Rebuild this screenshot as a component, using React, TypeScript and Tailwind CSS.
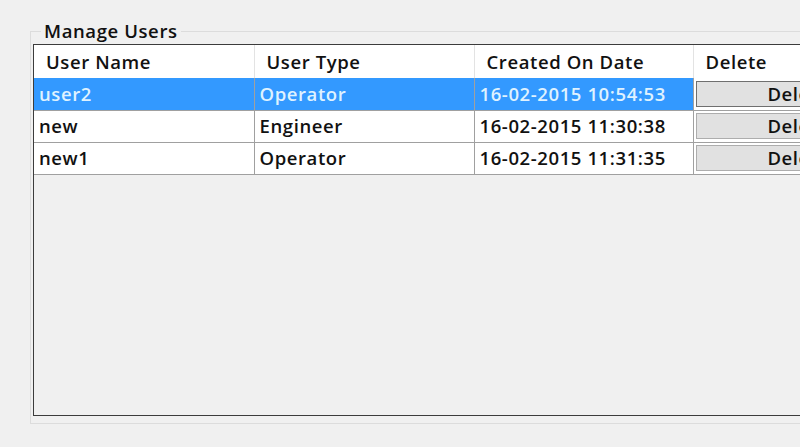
import React from 'react';

interface UserRow {
  name: string;
  type: string;
  created: string;
}

const users: UserRow[] = [
  { name: 'user2', type: 'Operator', created: '16-02-2015 10:54:53' },
  { name: 'new', type: 'Engineer', created: '16-02-2015 11:30:38' },
  { name: 'new1', type: 'Operator', created: '16-02-2015 11:31:35' },
];

const selectedIndex = 0;

const App: React.FC = () => {
  return (
    <div className="w-[800px] h-[447px] overflow-hidden bg-[#f0f0f0] pt-[19px] pl-[30px] font-['Open_Sans',sans-serif] text-[18.5px] font-semibold tracking-[0.6px] text-[#111]">
      <fieldset className="w-[820px] h-[405px] border border-[#dcdcdc] pl-[2px] pt-0">
        <legend className="ml-[8px] px-[3px] leading-[24px] text-[#111]">Manage Users</legend>

        <div className="w-[880px] h-[372px] border border-[#3c3c3c] bg-[#f0f0f0] mt-[1px]">
          <table className="border-collapse table-fixed">
            <colgroup>
              <col className="w-[220px]" />
              <col className="w-[220px]" />
              <col className="w-[219px]" />
              <col className="w-[210px]" />
            </colgroup>
            <thead>
              <tr className="h-[33px] bg-white">
                {['User Name', 'User Type', 'Created On Date', 'Delete'].map((h, i) => (
                  <th
                    key={h}
                    className={`text-left font-semibold pl-[12px] align-middle ${i > 0 ? 'border-l border-[#e3e3e3]' : ''}`}
                  >
                    {h}
                  </th>
                ))}
              </tr>
            </thead>
            <tbody>
              {users.map((u, idx) => {
                const sel = idx === selectedIndex;
                return (
                  <tr
                    key={u.name}
                    className={`h-[32px] border-b border-[#a0a0a0] ${sel ? 'bg-[#3399ff] text-[#dff2ff]' : 'bg-white'}`}
                  >
                    <td className="pl-[5px] py-0 leading-[22px]">{u.name}</td>
                    <td className="pl-[5px] py-0 leading-[22px] border-l border-[#a0a0a0]">{u.type}</td>
                    <td className="pl-[5px] py-0 leading-[22px] border-l border-[#a0a0a0]">{u.created}</td>
                    <td className="border-l border-[#a0a0a0] p-[2px] bg-white">
                      <button
                        className={`block w-full h-[26px] leading-[22px] bg-[#e1e1e1] text-[#111] text-center border ${sel ? 'border-[#6f6f6f]' : 'border-[#adadad]'}`}
                      >
                        Delete
                      </button>
                    </td>
                  </tr>
                );
              })}
            </tbody>
          </table>
        </div>
      </fieldset>
    </div>
  );
};

export default App;
